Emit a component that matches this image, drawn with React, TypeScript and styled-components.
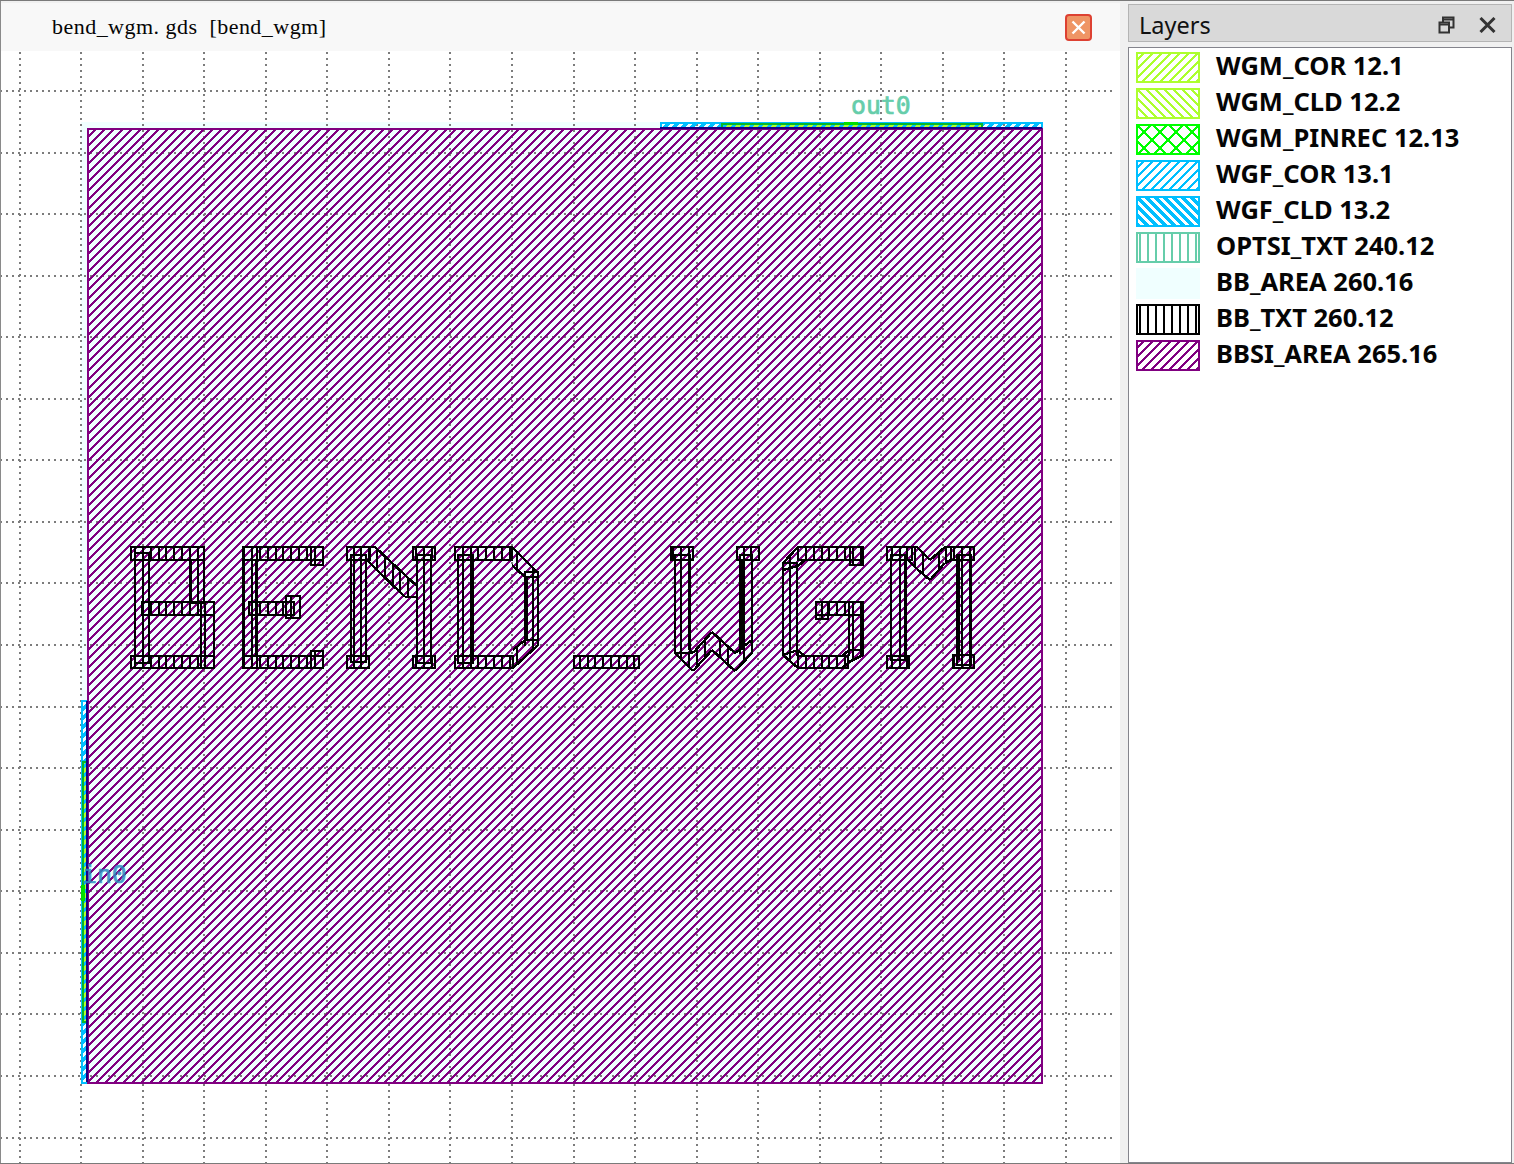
import React from 'react';
import styled, { createGlobalStyle } from 'styled-components';

const GlobalStyle = createGlobalStyle`
  html, body {
    margin: 0;
    padding: 0;
    height: 100%;
    background: #f0f0f0;
    overflow: hidden;
  }
`;

const Window = styled.div`
  display: flex;
  width: 1514px;
  height: 1164px;
  box-sizing: border-box;
  border-top: 1px solid #7a7a7a;
  border-bottom: 1px solid #7a7a7a;
  background: #f0f0f0;
`;

const EditorPane = styled.div`
  display: flex;
  flex-direction: column;
  width: 1120px;
  box-sizing: border-box;
  border-left: 1px solid #8a8a8a;
  padding-top: 2px;
`;

const TabBar = styled.div`
  display: flex;
  align-items: center;
  justify-content: space-between;
  height: 48px;
  flex: none;
  box-sizing: border-box;
  padding: 0 28px 0 51px;
  background: #f8f8f8;
`;

const TabTitle = styled.span`
  font-family: 'Liberation Serif', 'Noto Sans CJK SC', serif;
  font-size: 22px;
  letter-spacing: 0.47px;
  white-space: pre;
  color: #050505;
`;

const TabClose = styled.button`
  display: flex;
  align-items: center;
  justify-content: center;
  width: 27px;
  height: 27px;
  padding: 0;
  box-sizing: border-box;
  border: 2px solid #dd4132;
  border-radius: 4px;
  background: #ef9565;
`;

const Canvas = styled.div`
  flex: 1;
  min-height: 0;
  background: #fff;
  svg {
    display: block;
  }
`;

const Dock = styled.div`
  display: flex;
  flex-direction: column;
  width: 386px;
  margin-left: 8px;
  padding-top: 3px;
  gap: 5px;
`;

const DockTitle = styled.div`
  display: flex;
  align-items: center;
  height: 38px;
  flex: none;
  box-sizing: border-box;
  padding: 3px 15px 0 10px;
  gap: 24px;
  border: 1px solid #b4b4b4;
  background: #d9d9d9;
  margin-right: 2px;
`;

const DockLabel = styled.span`
  flex: 1;
  font-family: 'Noto Sans', 'Open Sans', sans-serif;
  font-size: 23.5px;
  color: #111;
`;

const LayerList = styled.div`
  flex: 1;
  box-sizing: border-box;
  padding: 1px 7px;
  margin-right: 2px;
  border: 1px solid #84848c;
  background: #fff;
`;

const LayerRow = styled.div`
  display: flex;
  align-items: center;
  gap: 16px;
  height: 36px;
  svg {
    display: block;
    flex: none;
  }
`;

const LayerName = styled.span`
  font-family: 'Noto Sans', 'Open Sans', sans-serif;
  font-weight: 700;
  font-size: 25.5px;
  color: #050505;
  white-space: nowrap;
  margin-top: -4px;
`;

type HatchKind = 'fwd' | 'back' | 'cross' | 'vert' | 'none';

const layers: { name: string; color: string; kind: HatchKind; line: number; fill?: string }[] = [
  { name: 'WGM_COR 12.1', color: '#adff2f', kind: 'fwd', line: 2 },
  { name: 'WGM_CLD 12.2', color: '#adff2f', kind: 'back', line: 2.5 },
  { name: 'WGM_PINREC 12.13', color: '#00ff00', kind: 'cross', line: 2.5 },
  { name: 'WGF_COR 13.1', color: '#00bfff', kind: 'fwd', line: 2.8 },
  { name: 'WGF_CLD 13.2', color: '#00bfff', kind: 'back', line: 3 },
  { name: 'OPTSI_TXT 240.12', color: '#66cdaa', kind: 'vert', line: 2 },
  { name: 'BB_AREA 260.16', color: '#f0ffff', kind: 'none', line: 0, fill: '#f0ffff' },
  { name: 'BB_TXT 260.12', color: '#000000', kind: 'vert', line: 2 },
  { name: 'BBSI_AREA 265.16', color: '#800080', kind: 'fwd', line: 2 },
];

const hatchPath = (kind: HatchKind, p: number) => {
  const fwd = `M-1,1 L1,-1 M0,${p} L${p},0 M${p - 1},${p + 1} L${p + 1},${p - 1}`;
  const back = `M-1,${p - 1} L1,${p + 1} M0,0 L${p},${p} M${p - 1},-1 L${p + 1},1`;
  if (kind === 'fwd') return fwd;
  if (kind === 'back') return back;
  if (kind === 'cross') return `${fwd} ${back}`;
  if (kind === 'vert') return `M${p / 2},0 L${p / 2},${p}`;
  return '';
};

const tileSize = (kind: HatchKind) => (kind === 'cross' ? 16 : kind === 'vert' ? 8 : 9);

const Swatch = ({ id, color, kind, line, fill }: { id: string; color: string; kind: HatchKind; line: number; fill?: string }) => {
  const p = tileSize(kind);
  return (
    <svg width="64" height="31" shapeRendering="crispEdges">
      <defs>
        <pattern id={id} width={p} height={p} patternUnits="userSpaceOnUse">
          <path d={hatchPath(kind, p)} stroke={color} strokeWidth={line} fill="none" />
        </pattern>
      </defs>
      <rect x="1" y="1" width="62" height="29" fill={fill || '#fff'} />
      <rect x="1" y="1" width="62" height="29" fill={kind === 'none' ? 'none' : `url(#${id})`} stroke={color} strokeWidth="2" />
    </svg>
  );
};

// screen-space coordinates of the layout view
const GRID_STEP = 61.56;
const gridX = Array.from({ length: 18 }, (_, i) => Math.round(19.5 + i * GRID_STEP));
const gridY = Array.from({ length: 18 }, (_, i) => Math.round(91 + i * GRID_STEP));

const TICK_STEP = 7.8;
const TICK_BASE = 143;

// [x, y, w, h, open side]
type Bar = [number, number, number, number, ('bottom' | 'top')?];
// [x1, x2, top1, top2, bottom1, bottom2]
type Slant = [number, number, number, number, number, number];

const textBars: Bar[] = [
  // B
  [135, 553, 14, 110], [190, 547, 14, 56], [131, 547, 73, 13], [142, 602, 72, 13], [201, 602, 13, 66], [131, 656, 83, 12],
  // E
  [243, 547, 14, 121], [243, 547, 80, 13], [311, 547, 12, 18], [243, 656, 80, 12], [311, 651, 12, 17], [249, 602, 45, 13], [286, 596, 14, 22],
  // N
  [351, 555, 15, 107], [347, 547, 23, 13], [347, 656, 22, 12], [417, 555, 14, 108], [413, 547, 22, 13], [413, 656, 22, 12],
  // D
  [458, 555, 15, 108], [455, 547, 57, 13], [455, 656, 58, 12], [525, 572, 13, 73, 'bottom'],
  // _
  [574, 656, 65, 12],
  // W
  [675, 555, 15, 98, 'bottom'], [671, 547, 22, 13], [740, 555, 12, 98, 'bottom'], [737, 547, 22, 13],
  // G
  [798, 547, 65, 13], [850, 547, 13, 18], [783, 563, 14, 92, 'bottom'], [798, 656, 50, 12], [849, 602, 14, 53, 'bottom'], [816, 602, 47, 13], [816, 602, 12, 17],
  // M
  [891, 555, 15, 105], [887, 547, 25, 13], [887, 656, 22, 12], [957, 555, 14, 110], [951, 547, 23, 13], [953, 655, 21, 13],
];

const textSlants: Slant[] = [
  // N
  [366, 375, 547, 547, 559, 568],
  [375, 405, 547, 575, 568, 597],
  [405, 417, 575, 586, 597, 597],
  // D
  [512, 525, 547, 560, 565, 577],
  [525, 538, 560, 573, 577, 577],
  [513, 525, 650, 640, 668, 657],
  [525, 538, 640, 640, 657, 645],
  // W
  [675, 693, 653, 653, 653, 671],
  [690, 693, 650, 653, 668, 671],
  [693, 712, 653, 632, 671, 650],
  [712, 735, 632, 653, 650, 671],
  [735, 752, 653, 640, 671, 653],
  // G
  [783, 798, 563, 547, 570, 566],
  [798, 805, 566, 560, 566, 560],
  [783, 798, 655, 650, 655, 668],
  [797, 805, 650, 656, 668, 668],
  [842, 849, 656, 650, 668, 662],
  [849, 863, 650, 650, 662, 655],
  // M
  [908, 917, 547, 547, 560, 569],
  [917, 930, 547, 560, 569, 580],
  [930, 945, 560, 547, 580, 563],
  [945, 951, 547, 547, 563, 560],
];

// places where two outlines of the layer sit on top of each other
const heavyEdges: Bar[] = [
  [148, 555, 2, 108], [190, 560, 2, 42],
  [255, 560, 3, 96],
  [471, 555, 3, 108], [525, 577, 3, 63],
  [688, 560, 2, 90], [740, 560, 3, 90],
  [904, 556, 3, 104], [957, 556, 3, 104],
];

const ticksBetween = (x1: number, x2: number) => {
  const first = Math.ceil((x1 + 1 - TICK_BASE) / TICK_STEP);
  const out: number[] = [];
  for (let k = first; TICK_BASE + k * TICK_STEP < x2 - 1; k++) {
    out.push(Math.round(TICK_BASE + k * TICK_STEP));
  }
  return out;
};

const HatchedBar = ({ bar }: { bar: Bar }) => {
  const [x, y, w, h, open] = bar;
  return (
    <g>
      <line x1={x} x2={x} y1={y - 1} y2={y + h + 1} />
      <line x1={x + w} x2={x + w} y1={y - 1} y2={y + h + 1} />
      {open !== 'top' && <line x1={x} x2={x + w} y1={y} y2={y} />}
      {open !== 'bottom' && <line x1={x} x2={x + w} y1={y + h} y2={y + h} />}
      {ticksBetween(x, x + w).map((tx) => (
        <line key={tx} x1={tx} x2={tx} y1={y} y2={y + h} />
      ))}
    </g>
  );
};

const HatchedSlant = ({ slant }: { slant: Slant }) => {
  const [x1, x2, t1, t2, b1, b2] = slant;
  const at = (a: number, b: number, x: number) => a + ((b - a) * (x - x1)) / (x2 - x1);
  return (
    <g>
      <line x1={x1} y1={t1} x2={x2} y2={t2} />
      <line x1={x1} y1={b1} x2={x2} y2={b2} />
      {ticksBetween(x1, x2).map((tx) => (
        <line key={tx} x1={tx} x2={tx} y1={at(t1, t2, tx)} y2={at(b1, b2, tx)} />
      ))}
    </g>
  );
};

const PortLabel = styled.text`
  font-family: 'DejaVu Sans Mono', monospace;
  font-size: 24.8px;
  stroke-width: 0.7px;
`;

const LayoutView = () => (
  <svg width="1119" height="1112" viewBox="1 51 1119 1112">
    <defs>
      <pattern id="cor" width="9" height="9" patternUnits="userSpaceOnUse">
        <path d={hatchPath('fwd', 9)} stroke="#00bfff" strokeWidth="3" fill="none" shapeRendering="crispEdges" />
      </pattern>
      <pattern id="wgm" width="9" height="9" patternUnits="userSpaceOnUse">
        <path d={hatchPath('fwd', 9)} stroke="#adff2f" strokeWidth="3" fill="none" shapeRendering="crispEdges" />
      </pattern>
      <pattern id="bbsi" width="9" height="9" patternUnits="userSpaceOnUse">
        <path d={hatchPath('fwd', 9)} stroke="#800080" strokeWidth="2.7" fill="none" shapeRendering="crispEdges" />
      </pattern>
    </defs>

    <rect x="81" y="122" width="961" height="961" fill="#f0ffff" />

    <g stroke="#7c7c7c" strokeWidth="2" strokeDasharray="2 4" shapeRendering="crispEdges">
      {gridY.map((y) => (
        <line key={y} x1="0" x2="1116" y1={y} y2={y} />
      ))}
      {gridX.map((x) => (
        <line key={x} x1={x} x2={x} y1="52" y2="1163" />
      ))}
    </g>

    <g shapeRendering="crispEdges">
      <rect x="661" y="123" width="381" height="5" fill="url(#cor)" stroke="#00bfff" strokeWidth="2" />
      <rect x="722" y="124" width="260" height="4" fill="#00bfff" />
      <rect x="722" y="124" width="260" height="4" fill="url(#wgm)" stroke="#06b82a" strokeWidth="2" />
      <rect x="844" y="122" width="14" height="3" fill="#00e000" />
      <rect x="82" y="701" width="5" height="382" fill="url(#cor)" stroke="#00bfff" strokeWidth="2" />
      <rect x="83" y="762" width="4" height="260" fill="#00bfff" />
      <rect x="83" y="762" width="4" height="260" fill="url(#wgm)" stroke="#06b82a" strokeWidth="2" />
      <rect x="81" y="885" width="4" height="16" fill="#00e000" />
    </g>

    <rect x="87.5" y="128.5" width="954" height="954" fill="url(#bbsi)" stroke="#800080" strokeWidth="2" shapeRendering="crispEdges" />
    <g stroke="#1a0080" strokeWidth="2" shapeRendering="crispEdges">
      <line x1="87" x2="87" y1="701" y2="1082" />
      <line x1="660" x2="1042" y1="128" y2="128" />
    </g>

    <g stroke="#000" strokeWidth="2.4" fill="none" shapeRendering="crispEdges">
      <title>BEND_WGM</title>
      {textBars.map((b, i) => (
        <HatchedBar key={i} bar={b} />
      ))}
      {textSlants.map((s, i) => (
        <HatchedSlant key={i} slant={s} />
      ))}
    </g>
    <g fill="#000" shapeRendering="crispEdges">
      {heavyEdges.map((b, i) => (
        <rect key={i} x={b[0]} y={b[1]} width={b[2]} height={b[3]} />
      ))}
    </g>

    <PortLabel x="851" y="114" fill="#66cdaa" stroke="#66cdaa">out0</PortLabel>
    <PortLabel x="82" y="883" fill="#2c8cc0" stroke="#2c8cc0" opacity="0.85">in0</PortLabel>
  </svg>
);

const App = () => (
  <Window>
    <GlobalStyle />
    <EditorPane>
      <TabBar>
        <TabTitle>{'bend_wgm. gds  [bend_wgm]'}</TabTitle>
        <TabClose aria-label="close">
          <svg width="17" height="17" viewBox="0 0 17 17">
            <path d="M2.5 2.5 L14.5 14.5 M14.5 2.5 L2.5 14.5" stroke="#fff" strokeWidth="2.4" />
          </svg>
        </TabClose>
      </TabBar>
      <Canvas>
        <LayoutView />
      </Canvas>
    </EditorPane>
    <Dock>
      <DockTitle>
        <DockLabel>Layers</DockLabel>
        <svg width="17" height="18" viewBox="0 0 17 18" fill="none" stroke="#333" strokeWidth="2">
          <path d="M5 6 V1.5 H15.5 V11.5 H11" />
          <rect x="1.5" y="6.5" width="9.5" height="10" />
          <path d="M5 3.5 H15" />
          <path d="M1 8.5 H11" />
        </svg>
        <svg width="17" height="16" viewBox="0 0 17 16">
          <path d="M1.5 1 L15.5 15 M15.5 1 L1.5 15" stroke="#333" strokeWidth="3" />
        </svg>
      </DockTitle>
      <LayerList>
        {layers.map((l, i) => (
          <LayerRow key={l.name}>
            <Swatch id={`swatch-${i}`} color={l.color} kind={l.kind} line={l.line} fill={l.fill} />
            <LayerName>{l.name}</LayerName>
          </LayerRow>
        ))}
      </LayerList>
    </Dock>
  </Window>
);

export default App;
